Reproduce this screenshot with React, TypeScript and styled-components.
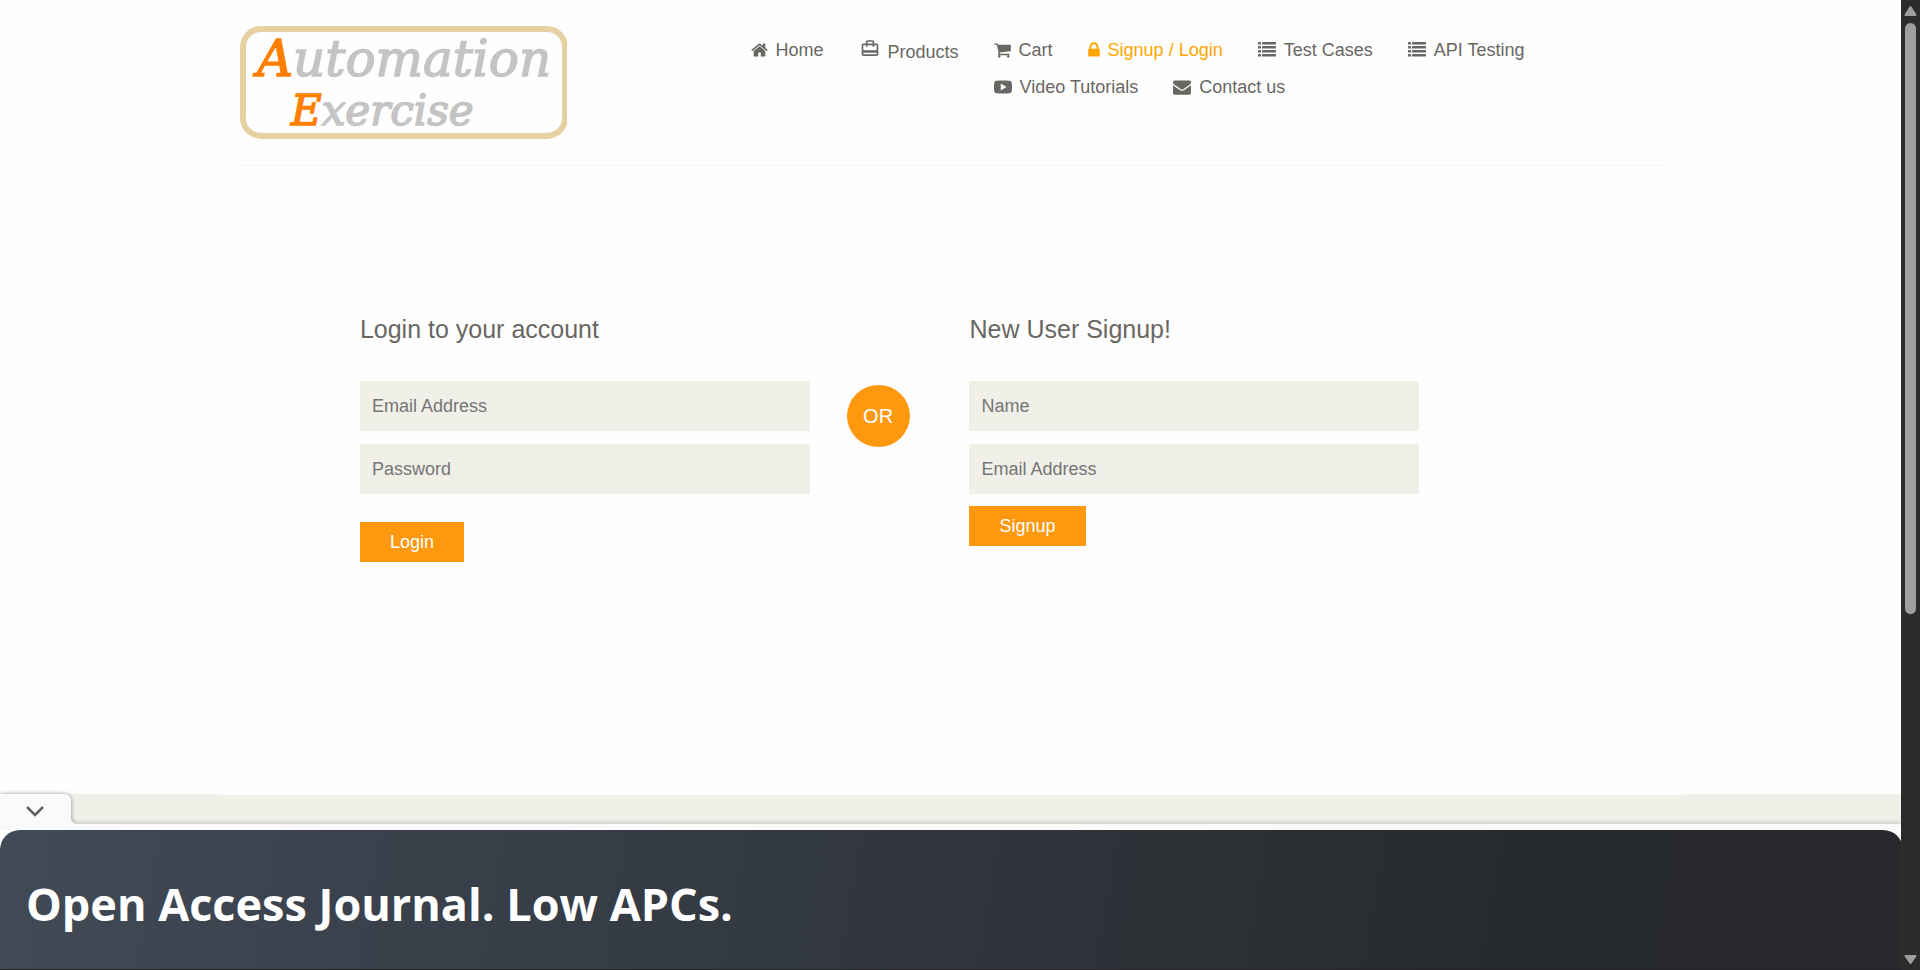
import React from "react";
import styled, { createGlobalStyle } from "styled-components";

const GlobalStyle = createGlobalStyle`
  * { box-sizing: border-box; }
  body {
    margin: 0;
    background: #fefefe;
    color: #696763;
    font-family: "Liberation Sans", Arial, sans-serif;
    font-size: 18px;
    line-height: 25px;
  }
`;

const Window = styled.div`
  display: flex;
  height: 100vh;
  overflow: hidden;
`;

const Page = styled.div`
  position: relative;
  flex: 1;
  min-width: 0;
  display: flex;
  flex-direction: column;
  overflow: hidden;
`;

const Container = styled.div`
  width: 100%;
  max-width: 1463px;
  margin: 0 auto;
  padding: 0 19px;
`;

const HeaderRow = styled.div`
  display: flex;
  padding: 25px 0;
  border-bottom: 1px solid #f5f5f5;
`;

const LogoLink = styled.a`
  display: block;
  flex: 0 0 34%;
  height: 115px;
`;

const Nav = styled.nav`
  flex: 1;
  display: flex;
  align-items: flex-start;
  gap: 35px;
  padding: 13px 0 0 28px;
`;

const NavList = styled.ul<{ $wrap?: boolean }>`
  display: flex;
  flex: ${(p) => (p.$wrap ? "1" : "none")};
  flex-wrap: ${(p) => (p.$wrap ? "wrap" : "nowrap")};
  gap: 12px ${(p) => (p.$wrap ? "35px" : "36px")};
  margin: 0;
  padding: 0;
  list-style: none;
`;

const NavLink = styled.a<{ $active?: boolean }>`
  display: flex;
  align-items: flex-start;
  gap: 8px;
  color: ${(p) => (p.$active ? "orange" : "#696763")};
  text-decoration: none;
  white-space: nowrap;
  svg { margin-top: 3px; }
`;

const ProductsLink = styled(NavLink)`
  span { padding-top: 2px; }
  svg { margin-top: 0; }
`;

const Icon = styled.svg`
  flex: none;
  fill: currentColor;
`;

const FormRow = styled.section`
  display: grid;
  grid-template-columns: repeat(12, minmax(0, 1fr));
  margin: 0 -19px;
  padding: 150px 0 232px;
`;

const FormColumn = styled.form<{ $start: number }>`
  grid-column: ${(p) => p.$start} / span 4;
  display: flex;
  flex-direction: column;
  align-items: flex-start;
  padding: 0 19px;
`;

const FormTitle = styled.h2`
  margin: 0 0 39px;
  font-size: 25px;
  line-height: 26px;
  font-weight: 400;
`;

const Fields = styled.div<{ $spaced?: boolean }>`
  display: flex;
  flex-direction: column;
  gap: 13px;
  width: 100%;
  margin-bottom: ${(p) => (p.$spaced ? "28px" : "12px")};
`;

const Field = styled.input`
  width: 100%;
  height: 50px;
  margin: 0;
  padding: 0 12px;
  border: 0;
  border-radius: 0;
  background: #f0f0e9;
  color: #696763;
  font: inherit;
  &::placeholder { color: #757575; opacity: 1; }
`;

const SubmitButton = styled.button`
  height: 40px;
  padding: 0 30px;
  border: 0;
  background: #fe980f;
  color: #fff;
  font: inherit;
`;

const OrColumn = styled.div`
  grid-column: 6 / span 1;
  padding: 69px 18px 0;
`;

const OrBadge = styled.h2`
  display: grid;
  place-items: center;
  width: 63px;
  height: 62px;
  margin: 0;
  border-radius: 50%;
  background: #fe980f;
  color: #fff;
  font-size: 20px;
  font-weight: 400;
`;

const Footer = styled.footer`
  flex: 1;
  background: #f0f0e9;
`;

const FooterEdge = styled.div`
  max-width: 1463px;
  height: 1px;
  margin: 0 auto;
  background: #fefefe;
`;

const Anchor = styled.aside`
  position: absolute;
  left: 0;
  right: 0;
  bottom: 0;
  padding-top: 6px;
  background: #fafafa;
  box-shadow: 0 0 6px rgba(0, 0, 0, 0.25);
`;

const AnchorToggle = styled.button`
  position: absolute;
  left: 0;
  bottom: 100%;
  width: 77px;
  height: 31px;
  padding: 0;
  border: 0;
  background: none;
  svg { display: block; overflow: visible; }
`;

const TabShape = styled.g`
  fill: #fafafa;
  clip-path: inset(-6px -6px 0 0);
  path { filter: drop-shadow(0 0 2px rgba(0, 0, 0, 0.4)); }
`;

const Backdrop = styled.div`
  background: #fff;
`;

const Banner = styled.a`
  display: flex;
  align-items: center;
  height: 140px;
  margin-right: -2px;
  padding: 9px 26px 0;
  border-bottom: 1px solid #25262b;
  border-radius: 20px 20px 0 0;
  background: linear-gradient(100deg, #414b55 0%, #3b424d 18%, #343b43 36%, #2f333b 55%, #2d3034 63%, #26292d 80%, #28292d 100%);
  color: #fff;
  font-family: "Open Sans", "Noto Sans", sans-serif;
  font-size: 45px;
  line-height: 60px;
  font-weight: 700;
  text-decoration: none;
`;

const Scrollbar = styled.div`
  flex: 0 0 19px;
  display: flex;
  flex-direction: column;
  align-items: center;
  background: #2c2c2c;
`;

const Track = styled.div`
  flex: 1;
  width: 11px;
`;

const Thumb = styled.div`
  height: 64%;
  border-radius: 6px;
  background: #9f9f9f;
`;

const HomeIcon = () => (
  <Icon width="17" height="18" viewBox="64 0 1664 1792" aria-hidden="true">
    <path d="M1472 992v480q0 26-19 45t-45 19h-384v-384h-256v384h-384q-26 0-45-19t-19-45v-480q0-1 .5-3t.5-3l575-474 575 474q1 2 1 6zm223-69l-62 74q-8 9-21 11h-3q-13 0-21-7l-692-577-692 577q-12 8-24 7-13-2-21-11l-62-74q-8-10-7-23.5t11-21.5l719-599q32-26 76-26t76 26l244 204v-195q0-14 9-23t23-9h192q14 0 23 9t9 23v408l219 182q10 8 11 21.5t-7 23.5z" />
  </Icon>
);

const ProductsIcon = () => (
  <Icon width="20" height="21" viewBox="0 0 24 24" aria-hidden="true">
    <path d="M20 6h-3V4c0-1.11-.89-2-2-2H9c-1.11 0-2 .89-2 2v2H4c-1.11 0-2 .89-2 2v11c0 1.11.89 2 2 2h16c1.11 0 2-.89 2-2V8c0-1.11-.89-2-2-2zM9 4h6v2H9V4zm11 15H4v-2h16v2zm0-5H4V8h3v2h2V8h6v2h2V8h3v6z" />
  </Icon>
);

const CartIcon = () => (
  <Icon width="17" height="18" viewBox="64 0 1664 1792" aria-hidden="true">
    <path d="M704 1536q0 52-38 90t-90 38-90-38-38-90 38-90 90-38 90 38 38 90zm896 0q0 52-38 90t-90 38-90-38-38-90 38-90 90-38 90 38 38 90zm128-1088v512q0 24-16.5 42.5t-40.5 21.5l-1044 122q13 60 13 70 0 16-24 64h920q26 0 45 19t19 45-19 45-45 19h-1024q-26 0-45-19t-19-45q0-11 8-31.5t16-36 21.5-40 15.5-29.5l-177-823h-204q-26 0-45-19t-19-45 19-45 45-19h256q16 0 28.5 6.5t19.5 15.5 13 24.5 8 26 5.5 29.5 4.5 26h1201q26 0 45 19t19 45z" />
  </Icon>
);

const LockIcon = () => (
  <Icon width="12" height="18" viewBox="320 0 1152 1792" aria-hidden="true">
    <path d="M640 768h512v-192q0-106-75-181t-181-75-181 75-75 181v192zm832 96v576q0 40-28 68t-68 28h-960q-40 0-68-28t-28-68v-576q0-40 28-68t68-28h32v-192q0-184 132-316t316-132 316 132 132 316v192h32q40 0 68 28t28 68z" />
  </Icon>
);

const ListIcon = () => (
  <Icon width="18" height="18" viewBox="0 0 18 18" aria-hidden="true">
    {[1, 5, 9, 13].map((y) => (
      <g key={y}>
        <rect x="0" y={y} width="3" height="2.6" rx=".4" />
        <rect x="4" y={y} width="14" height="2.6" rx=".4" />
      </g>
    ))}
  </Icon>
);

const VideoIcon = () => (
  <Icon width="18" height="18" viewBox="0 0 18 18" aria-hidden="true">
    <path
      fillRule="evenodd"
      d="M9 2.500c3 0 5 .1 6.400 .3 1.500 .2 2.200 1 2.400 2.400 .3 2.500 .3 5.100 0 7.600-.2 1.400-.9 2.200-2.400 2.400-3.800 .4-9 .4-12.800 0C1.100 15 .4 14.200 .2 12.800-.1 10.300-.1 7.700 .2 5.200 .4 3.800 1.100 3 2.600 2.800 4 2.600 6 2.500 9 2.500zM6.800 5.400v7.200L12.500 9z"
    />
  </Icon>
);

const EnvelopeIcon = () => (
  <Icon width="18" height="18" viewBox="0 0 1792 1792" aria-hidden="true">
    <path d="M1792 710v794q0 66-47 113t-113 47h-1472q-66 0-113-47t-47-113v-794q44 49 101 87 362 246 497 345 57 42 92.500 65.500t94.500 48 110 24.500h2q51 0 110-24.500t94.500-48 92.500-65.500q170-123 498-345 57-39 100-87zm0-294q0 79-49 151t-122 123q-376 261-468 325-10 7-42.500 31t-54 38.500-52 32.500-57.500 27-50 9h-2q-23 0-50-9t-57.500-27-52-32.500-54-38.500-42.500-31q-91-64-262-182.500t-205-142.500q-62-42-117-115.500t-55-136.500q0-78 41.500-130t118.500-52h1472q65 0 112.500 47t47.500 113z" />
  </Icon>
);

const Logo = () => (
  <svg width="329" height="115" viewBox="0 0 329 115" role="img" aria-label="Automation Exercise">
    <rect x="5" y="4" width="322" height="107" rx="18" fill="none" stroke="#e6d1a2" strokeWidth="6" />
    <g
      fontFamily="DejaVu Serif, Liberation Serif, serif"
      fontStyle="italic"
      fill="#c4c4c4"
      stroke="#c4c4c4"
      strokeWidth="1.5"
    >
      <text x="19" y="51" fontSize="50">
        <tspan fill="#ff8000" stroke="#ff8000">A</tspan>utomation
      </text>
      <text x="53" y="100" fontSize="42">
        <tspan fill="#ff8000" stroke="#ff8000">E</tspan>xercise
      </text>
    </g>
  </svg>
);

const secondaryLinks = [
  { label: "Cart", icon: <CartIcon /> },
  { label: "Signup / Login", icon: <LockIcon />, active: true },
  { label: "Test Cases", icon: <ListIcon /> },
  { label: "API Testing", icon: <ListIcon /> },
  { label: "Video Tutorials", icon: <VideoIcon /> },
  { label: "Contact us", icon: <EnvelopeIcon /> },
];

export default function App() {
  return (
    <>
      <GlobalStyle />
      <Window>
        <Page>
          <Container as="header">
            <HeaderRow>
              <LogoLink href="#">
                <Logo />
              </LogoLink>
              <Nav>
                <NavList>
                  <li>
                    <NavLink href="#">
                      <HomeIcon />
                      <span>Home</span>
                    </NavLink>
                  </li>
                  <li>
                    <ProductsLink href="#">
                      <ProductsIcon />
                      <span>Products</span>
                    </ProductsLink>
                  </li>
                </NavList>
                <NavList $wrap>
                  {secondaryLinks.map(({ label, icon, active }) => (
                    <li key={label}>
                      <NavLink href="#" $active={active}>
                        {icon}
                        <span>{label}</span>
                      </NavLink>
                    </li>
                  ))}
                </NavList>
              </Nav>
            </HeaderRow>
          </Container>

          <Container as="main">
            <FormRow>
              <FormColumn $start={2}>
                <FormTitle>Login to your account</FormTitle>
                <Fields $spaced>
                  <Field type="email" placeholder="Email Address" aria-label="Email Address" />
                  <Field type="password" placeholder="Password" aria-label="Password" />
                </Fields>
                <SubmitButton type="button">Login</SubmitButton>
              </FormColumn>
              <OrColumn>
                <OrBadge>OR</OrBadge>
              </OrColumn>
              <FormColumn $start={7}>
                <FormTitle>New User Signup!</FormTitle>
                <Fields>
                  <Field type="text" placeholder="Name" aria-label="Name" />
                  <Field type="email" placeholder="Email Address" aria-label="Signup Email Address" />
                </Fields>
                <SubmitButton type="button">Signup</SubmitButton>
              </FormColumn>
            </FormRow>
          </Container>

          <Footer>
            <FooterEdge />
          </Footer>

          <Anchor>
            <AnchorToggle type="button" aria-label="Collapse">
              <svg width="77" height="31" viewBox="0 0 77 31">
                <TabShape>
                  <path d="M0 1H65a6 6 0 0 1 6 6V25a6 6 0 0 0 6 6H0z" />
                </TabShape>
                <path d="M27 14l8 8 8-8" fill="none" stroke="#616161" strokeWidth="2.5" />
              </svg>
            </AnchorToggle>
            <Backdrop>
              <Banner href="#">Open Access Journal. Low APCs.</Banner>
            </Backdrop>
          </Anchor>
        </Page>

        <Scrollbar aria-hidden="true">
          <svg width="19" height="23" viewBox="0 0 19 23">
            <path d="M9.500 7L14.500 15H4.500z" fill="#9f9f9f" stroke="#9f9f9f" strokeWidth="2" strokeLinejoin="round" />
          </svg>
          <Track>
            <Thumb />
          </Track>
          <svg width="19" height="23" viewBox="0 0 19 23">
            <path d="M9.500 16L14.500 9H4.500z" fill="#9f9f9f" stroke="#9f9f9f" strokeWidth="2" strokeLinejoin="round" />
          </svg>
        </Scrollbar>
      </Window>
    </>
  );
}
